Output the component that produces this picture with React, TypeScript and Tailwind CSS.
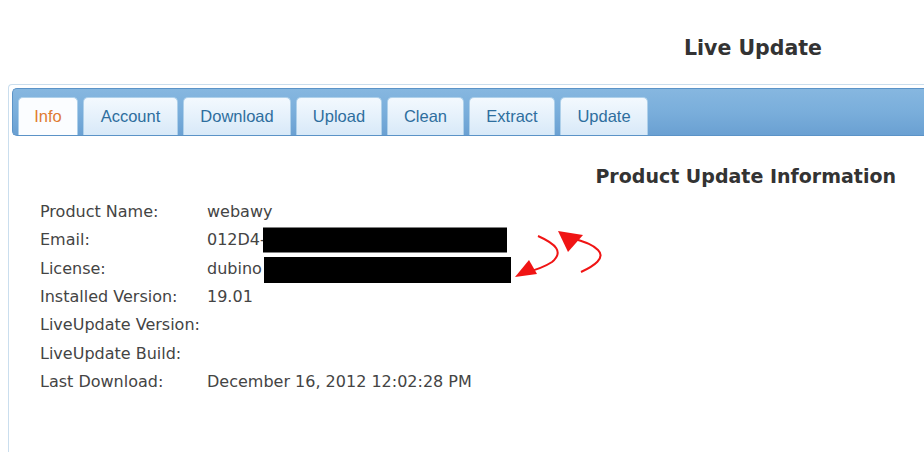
import React from 'react';

const tabs = [
  { label: 'Info', w: 'w-[60px]' },
  { label: 'Account', w: 'w-[95px]' },
  { label: 'Download', w: 'w-[108px]' },
  { label: 'Upload', w: 'w-[86px]' },
  { label: 'Clean', w: 'w-[77px]' },
  { label: 'Extract', w: 'w-[86px]' },
  { label: 'Update', w: 'w-[88px]' },
];

const rows: { label: string; value?: string; hidden?: 'email' | 'license' }[] = [
  { label: 'Product Name:', value: 'webawy' },
  { label: 'Email:', value: '012D4-', hidden: 'email' },
  { label: 'License:', value: 'dubino', hidden: 'license' },
  { label: 'Installed Version:', value: '19.01' },
  { label: 'LiveUpdate Version:' },
  { label: 'LiveUpdate Build:' },
  { label: 'Last Download:', value: 'December 16, 2012 12:02:28 PM' },
];

export default function App() {
  return (
    <div className="relative w-[924px] h-[452px] overflow-hidden bg-white font-['DejaVu_Sans',sans-serif]">
      {/* page title */}
      <div className="flex justify-end pr-[102px] pt-[36px] h-[84px]">
        <h1 className="text-[20.5px] leading-[24px] font-bold text-[#333]">Live Update</h1>
      </div>

      {/* tab panel */}
      <div className="ml-[8px] h-[368px] border-l border-t border-[#cadeee] rounded-tl-[4px] pt-[3px] pl-[3px]">
        <div className="h-[48px] flex items-end gap-[5px] pl-[5px] border border-r-0 border-[#5b93c7] rounded-l-[5px] bg-linear-to-b from-[#86b7e0] via-[#7aaedb] to-[#6aa0d2]">
          {tabs.map((t, i) => (
            <div
              key={t.label}
              className={`${t.w} h-[38px] flex items-center justify-center rounded-t-[5px] border border-b-0 font-['Liberation_Sans',Arial,sans-serif] text-[16.5px] ${
                i === 0
                  ? 'bg-[#fbfdff] border-[#aed0ea] text-[#e07b32]'
                  : 'bg-linear-to-b from-[#f3f9fe] to-[#d8e9f8] border-[#aed0ea] text-[#2e6e9e]'
              }`}
            >
              {t.label}
            </div>
          ))}
        </div>

        <div className="flex justify-end pr-[28px] mt-[28px]">
          <h2 className="text-[19px] leading-[24px] font-bold text-[#333]">Product Update Information</h2>
        </div>

        <div className="mt-[10px] pl-[28px] text-[16px] text-[#444]">
          {rows.map((r) => (
            <div key={r.label} className="flex items-center h-[28.33px]">
              <div className="w-[167px]">{r.label}</div>
              <div className="relative flex items-center">
                <span>{r.value}</span>
                {r.hidden === 'email' && <span className="absolute left-[56px] top-1/2 -translate-y-1/2 w-[244px] h-[25px] bg-black" />}
                {r.hidden === 'license' && <span className="ml-[2px] mt-[2px] inline-block w-[247px] h-[26px] bg-black" />}
              </div>
            </div>
          ))}
        </div>
      </div>

      {/* red annotation arrows */}
      <svg className="absolute left-[500px] top-[220px]" width="120" height="70" viewBox="500 220 120 70">
        <path d="M538 236 C 556 244, 564 252, 552 262 C 546 266, 536 270, 524 273" fill="none" stroke="#f01414" strokeWidth="2" />
        <polygon points="515,277 529,260 537,274" fill="#f01414" />
        <path d="M581 272 C 594 266, 606 258, 598 250 C 592 244, 584 242, 572 238" fill="none" stroke="#f01414" strokeWidth="2" />
        <polygon points="558,231 583,235 568,252" fill="#f01414" />
      </svg>
    </div>
  );
}
